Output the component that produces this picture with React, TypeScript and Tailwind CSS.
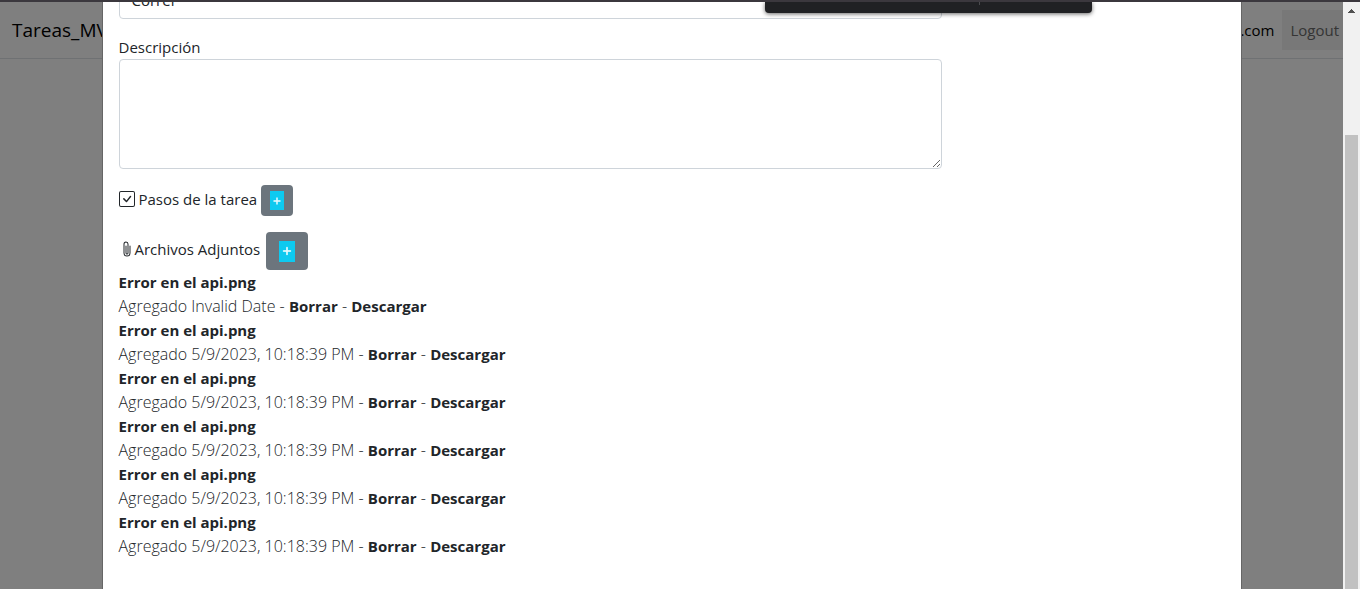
import React from "react";
import { BsCheckSquare, BsPaperclip, BsPlus } from "react-icons/bs";

type Attachment = { title: string; added: string };

const attachments: Attachment[] = [
  { title: "Error en el api.png", added: "Invalid Date" },
  { title: "Error en el api.png", added: "5/9/2023, 10:18:39 PM" },
  { title: "Error en el api.png", added: "5/9/2023, 10:18:39 PM" },
  { title: "Error en el api.png", added: "5/9/2023, 10:18:39 PM" },
  { title: "Error en el api.png", added: "5/9/2023, 10:18:39 PM" },
  { title: "Error en el api.png", added: "5/9/2023, 10:18:39 PM" },
];

function Navbar() {
  return (
    <header className="flex h-[57px] items-center justify-between border-b border-[#dee2e6] pl-3">
      <a href="#" className="text-[19px] text-black">
        Tareas_MV
      </a>
      <div className="flex items-center gap-2">
        <span className="text-[15px] text-black">.com</span>
        <button type="button" className="h-10 bg-[#f0f0f0] pl-2 pr-1 text-[15px] text-[#6b6b6b]">
          Logout
        </button>
      </div>
    </header>
  );
}

function AttachmentRow({ title, added }: Attachment) {
  return (
    <li>
      <p className="font-bold">{title}</p>
      <p>
        <span className="text-base font-light">Agregado {added} - </span>
        <a href="#" className="font-bold">
          Borrar
        </a>
        <span className="text-base font-light"> - </span>
        <a href="#" className="font-bold">
          Descargar
        </a>
      </p>
    </li>
  );
}

function TaskModal() {
  return (
    <section
      role="dialog"
      aria-label="Tarea"
      className="mx-auto h-full w-full max-w-[1140px] overflow-hidden border-x border-[#666] bg-white px-4"
    >
      <div className="-mx-3 flex">
        <div className="w-3/4 px-3">
          <div className="flex h-[17px] items-end overflow-hidden">
            <input
              aria-label="Título"
              defaultValue="Correr"
              className="h-[38px] w-full shrink-0 rounded border border-[#ced4da] px-3"
            />
          </div>
          <label htmlFor="descripcion" className="mt-4 block">
            Descripción
          </label>
          <textarea
            id="descripcion"
            className="block h-[110px] w-full rounded border border-[#ced4da] px-3 py-1.5"
          />
        </div>
      </div>
      <div className="mt-4 flex items-center gap-1">
        <div className="flex items-center gap-1 pb-1">
          <BsCheckSquare size={16} />
          <span>Pasos de la tarea</span>
        </div>
        <button
          type="button"
          aria-label="Agregar paso"
          className="flex h-[31px] w-8 items-center justify-center rounded bg-[#6c757d] text-white"
        >
          <span className="flex h-[19px] w-3.5 items-center justify-center bg-[#0dcaf0]">
            <BsPlus size={14} strokeWidth={0.5} />
          </span>
        </button>
      </div>
      <div className="mt-4 flex items-center gap-1.5">
        <div className="flex items-center pb-1">
          <BsPaperclip size={16} />
          <span>Archivos Adjuntos</span>
        </div>
        <button
          type="button"
          aria-label="Agregar archivo"
          className="flex h-[38px] w-[42px] items-center justify-center rounded bg-[#6c757d] text-white"
        >
          <span className="flex h-[21px] w-4 items-center justify-center bg-[#0dcaf0]">
            <BsPlus size={16} strokeWidth={0.5} />
          </span>
        </button>
      </div>
      <ul>
        {attachments.map((item, index) => (
          <AttachmentRow key={index} {...item} />
        ))}
      </ul>
    </section>
  );
}

function Scrollbar() {
  return (
    <div aria-hidden="true" className="flex w-[17px] shrink-0 flex-col items-center bg-[#f1f1f1] pt-[7px]">
      <svg width="7" height="4" viewBox="0 0 7 4" fill="#505050" shapeRendering="crispEdges">
        <path d="M3 0h1v1h1v1h1v1h1v1H0V3h1V2h1V1h1z" />
      </svg>
      <div className="mt-[122px] w-[13px] grow bg-[#c1c1c1]" />
    </div>
  );
}

export default function App() {
  return (
    <div className="relative flex h-screen flex-col overflow-hidden border-t-2 border-[#3b383e] bg-white font-['Open_Sans','Noto_Sans',sans-serif] text-[15px] leading-6 text-[#212529]">
      <div className="flex min-h-0 grow">
        <main className="relative min-w-0 grow">
          <Navbar />
          <div className="absolute inset-0 bg-black/50">
            <TaskModal />
          </div>
        </main>
        <Scrollbar />
      </div>
      <div
        aria-hidden="true"
        className="absolute top-0 right-[268px] flex h-[11px] w-[327px] justify-end rounded-b bg-[#202124] pr-28 shadow-[0_1px_4px_rgba(0,0,0,0.6)]"
      >
        <div className="h-[3px] w-px bg-[#4a4b4e]" />
      </div>
    </div>
  );
}
